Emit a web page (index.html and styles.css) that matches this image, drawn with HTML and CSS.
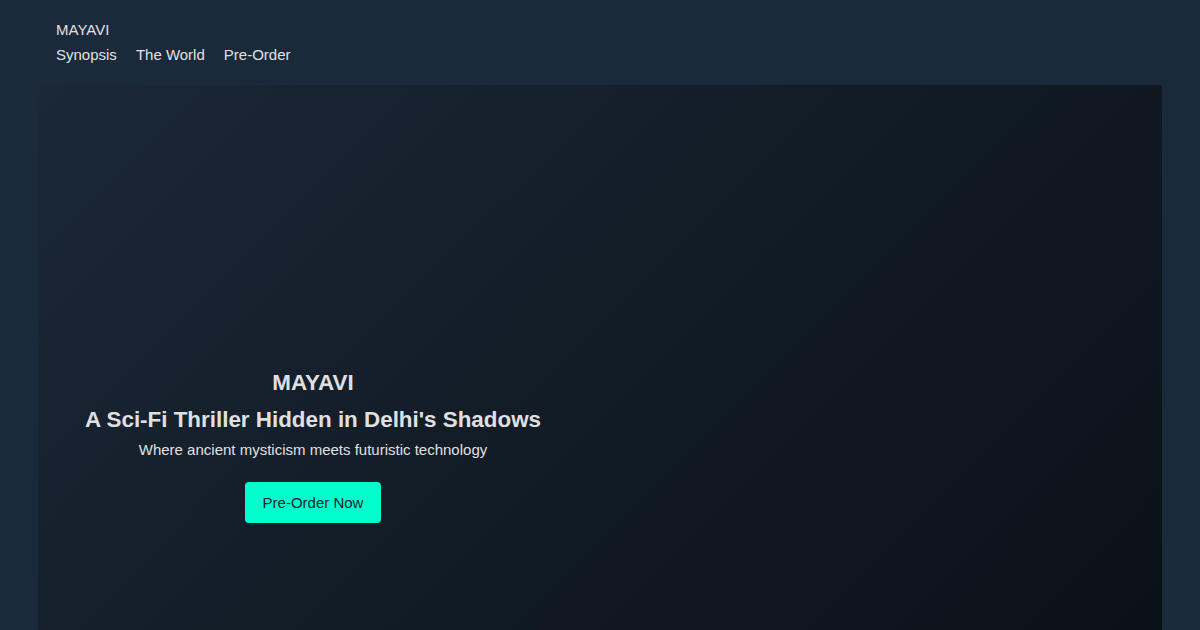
FILE: index.html
```html
<!DOCTYPE html>
<html lang="en">
<head>
    <meta charset="UTF-8">
    <meta name="viewport" content="width=device-width, initial-scale=1.0">
    <title>MAYAVI - A Sci-Fi Thriller</title>
    <link rel="stylesheet" href="styles.css">
</head>
<body>

    <header class="site-header">
        <div class="logo">MAYAVI</div>
        <nav class="nav-links">
            <a href="#synopsis">Synopsis</a>
            <a href="#world">The World</a>
            <a href="#preorder">Pre-Order</a>
        </nav>
    </header>

    <section class="hero">
        <div class="hero-content">
            <h1>MAYAVI</h1>
            <h2>A Sci-Fi Thriller Hidden in Delhi's Shadows</h2>
            <p>Where ancient mysticism meets futuristic technology</p>
            <a href="#preorder" class="cta-button">Pre-Order Now</a>
        </div>
        <div class="hero-art"></div>
    </section>

</body>
</html>
```

FILE: styles.css
```css
body {
    font-family: "Liberation Sans", Arial, Helvetica, sans-serif;
    color: #e0e0e0;
    background-color: #1b2a3b;
    margin: 0;
    padding: 0 38px;
    overflow: hidden;
}
.site-header {
    padding: 21px 18px 21px;
}
.logo {
    font-size: 15px;
    line-height: 18px;
    margin-bottom: 7px;
}
.nav-links {
    display: flex;
    gap: 19px;
}
.nav-links a {
    color: #e0e0e0;
    text-decoration: none;
    font-size: 15px;
    line-height: 18px;
}
.hero {
    display: grid;
    grid-template-columns: 550px 1fr;
    min-height: 545px;
    background: linear-gradient(135deg, #1b2838 0%, #131d28 45%, #0a1118 100%);
}
.hero-content {
    padding-top: 284px;
    text-align: center;
}
.hero h1 {
    font-size: 22.4px;
    margin: 0 0 9px;
    line-height: 28px;
}
.hero h2 {
    font-size: 22.4px;
    margin: 0 0 6px;
    line-height: 28px;
}
.hero p {
    font-size: 15px;
    margin: 0 0 22px;
    line-height: 20px;
}
.cta-button {
    display: inline-block;
    background-color: #00ffcc;
    color: #1a2533;
    text-decoration: none;
    font-size: 15px;
    line-height: 17px;
    padding: 12px 18px;
    border-radius: 4px;
}
```
